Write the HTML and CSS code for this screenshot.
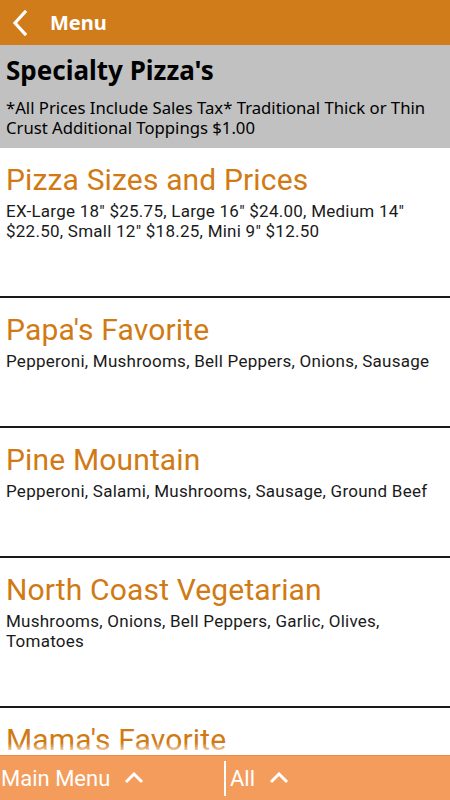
FILE: index.html
```html
<!DOCTYPE html>
<html lang="en">
<head>
    <meta charset="UTF-8">
    <meta name="viewport" content="width=device-width, initial-scale=1.0">
    <title>Menu</title>
    <link rel="stylesheet" href="styles.css">
</head>
<body>
<div class="app">
    <div class="topbar">
        <svg class="back" width="16" height="26" viewBox="0 0 16 26">
            <path d="M13 2 L3 13 L13 24" fill="none" stroke="#fff" stroke-width="3.2" stroke-linecap="square"/>
        </svg>
        <span class="topbar-title">Menu</span>
    </div>

    <div class="category">
        <h1>Specialty Pizza's</h1>
        <p>*All Prices Include Sales Tax* Traditional Thick or Thin Crust Additional Toppings $1.00</p>
    </div>

    <div class="list">
        <div class="item">
            <h3>Pizza Sizes and Prices</h3>
            <p>EX-Large 18" $25.75, Large 16" $24.00, Medium 14" $22.50, Small 12" $18.25, Mini 9" $12.50</p>
        </div>
        <div class="item">
            <h3>Papa's Favorite</h3>
            <p>Pepperoni, Mushrooms, Bell Peppers, Onions, Sausage</p>
        </div>
        <div class="item">
            <h3>Pine Mountain</h3>
            <p>Pepperoni, Salami, Mushrooms, Sausage, Ground Beef</p>
        </div>
        <div class="item">
            <h3>North Coast Vegetarian</h3>
            <p>Mushrooms, Onions, Bell Peppers, Garlic, Olives, Tomatoes</p>
        </div>
        <div class="item">
            <h3>Mama's Favorite</h3>
        </div>
        <div class="fade"></div>
    </div>

    <div class="bottombar">
        <div class="tab">
            <span>Main Menu</span>
            <svg class="up" width="20" height="12" viewBox="0 0 20 12">
                <path d="M2 10 L10 2 L18 10" fill="none" stroke="#fff" stroke-width="3"/>
            </svg>
        </div>
        <div class="tab tab-right">
            <span>All</span>
            <svg class="up" width="20" height="12" viewBox="0 0 20 12">
                <path d="M2 10 L10 2 L18 10" fill="none" stroke="#fff" stroke-width="3"/>
            </svg>
        </div>
    </div>
</div>
</body>
</html>
```

FILE: styles.css
```css
body {
    margin: 0;
    background-color: #fff;
    font-family: Roboto, "Noto Sans", sans-serif;
}
.app {
    height: 800px;
    display: flex;
    flex-direction: column;
    overflow: hidden;
}
.topbar {
    height: 45px;
    flex-shrink: 0;
    background-color: #d17c1b;
    display: flex;
    align-items: center;
}
.back {
    margin-left: 12px;
}
.topbar-title {
    margin-left: 22px;
    color: #fff;
    font-family: "Noto Sans", sans-serif;
    font-weight: bold;
    font-size: 20px;
}
.category {
    background-color: #c1c1c1;
    padding: 10px 6px 10px 6px;
    font-family: "Noto Sans", sans-serif;
    color: #000;
}
.category h1 {
    margin: 0 0 13px 0;
    font-size: 26px;
    line-height: 30px;
}
.category p {
    margin: 0;
    font-size: 16.7px;
    line-height: 20px;
}
.list {
    flex: 1;
    overflow: hidden;
    position: relative;
}
.item {
    padding: 14px 6px 55px 6px;
    border-bottom: 2px solid #1a1a1a;
}
.item h3 {
    margin: 0 0 3px 0;
    font-weight: normal;
    font-size: 30px;
    line-height: 36px;
    letter-spacing: 0.15px;
    color: #d17a14;
}
.item p {
    margin: 0;
    font-size: 17px;
    line-height: 20px;
    letter-spacing: 0.25px;
    color: #1a1a1a;
}
.fade {
    position: absolute;
    left: 0;
    right: 0;
    bottom: 0;
    height: 12px;
    background: linear-gradient(rgba(255, 255, 255, 0), #fff);
}
.bottombar {
    height: 45px;
    flex-shrink: 0;
    background-color: #f49c5b;
    border-top: 1px solid #ec8a45;
    box-sizing: border-box;
    display: flex;
    align-items: center;
}
.tab {
    width: 225px;
    display: flex;
    align-items: center;
    color: #fff;
    font-size: 22px;
}
.tab span {
    margin-left: 1px;
}
.tab .up {
    margin-left: 14px;
}
.tab-right {
    height: 35px;
    border-left: 2px solid #fff;
}
.tab-right span {
    margin-left: 4px;
}
```
